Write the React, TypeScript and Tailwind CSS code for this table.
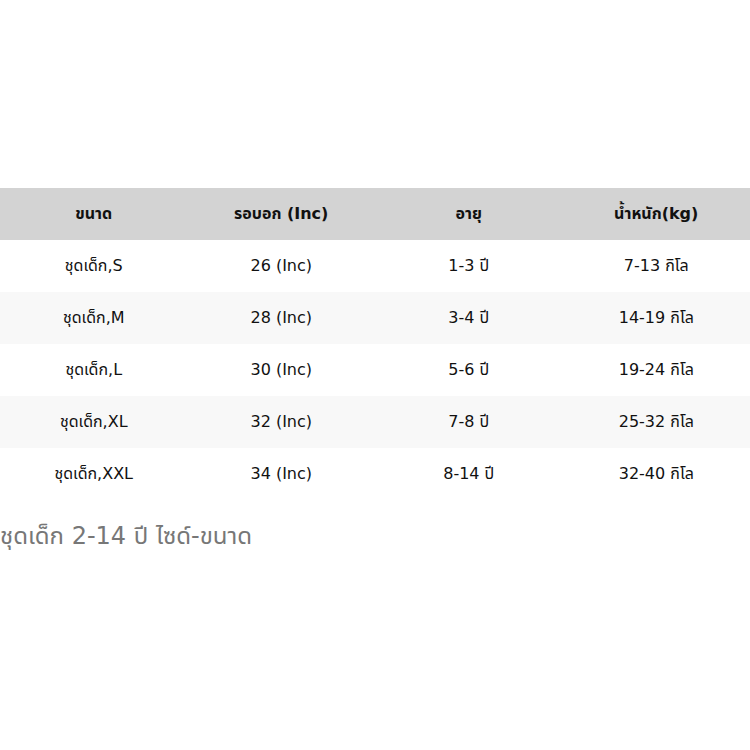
const HEAD = ['ขนาด', 'รอบอก (Inc)', 'อายุ', 'น้ำหนัก(kg)'];

const ROWS = [
  ['ชุดเด็ก,S', '26 (Inc)', '1-3 ปี', '7-13 กิโล'],
  ['ชุดเด็ก,M', '28 (Inc)', '3-4 ปี', '14-19 กิโล'],
  ['ชุดเด็ก,L', '30 (Inc)', '5-6 ปี', '19-24 กิโล'],
  ['ชุดเด็ก,XL', '32 (Inc)', '7-8 ปี', '25-32 กิโล'],
  ['ชุดเด็ก,XXL', '34 (Inc)', '8-14 ปี', '32-40 กิโล'],
];

export default function App() {
  return (
    <div className="w-[750px] h-[750px] bg-white pt-[188px] font-['DejaVu_Sans','Noto_Sans_Thai_UI','Noto_Sans_Thai',sans-serif]">
      <div className="grid grid-cols-4 h-[52px] bg-[#d3d3d3] text-[16px] font-bold text-[#111]">
        {HEAD.map(h => (
          <div key={h} className="flex items-center justify-center">{h}</div>
        ))}
      </div>
      {ROWS.map((r, i) => (
        <div
          key={r[0]}
          className={`grid grid-cols-4 h-[52px] text-[16px] text-[#111] ${i % 2 === 1 ? 'bg-[#f8f8f8]' : 'bg-white'}`}
        >
          {r.map((c, j) => (
            <div key={j} className="flex items-center justify-center">{c}</div>
          ))}
        </div>
      ))}
      <p className="mt-[18px] text-[24px] text-[#777]">ชุดเด็ก 2-14 ปี ไซด์-ขนาด</p>
    </div>
  );
}
